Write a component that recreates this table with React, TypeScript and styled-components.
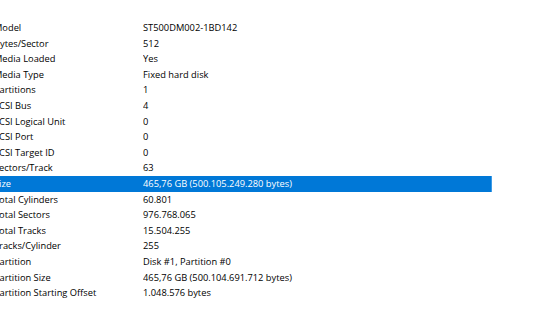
import React from "react";
import styled, { createGlobalStyle } from "styled-components";

const Global = createGlobalStyle`
  html, body { margin: 0; padding: 0; background: #fff; }
  body { width: 560px; height: 336px; overflow: hidden; }
`;

// Visible part of the properties list, scrolled a few pixels to the right.
const Viewport = styled.div`
  width: 560px;
  height: 336px;
  overflow: hidden;
  background: #ffffff;
  padding-top: 20px;
  box-sizing: border-box;
`;

const List = styled.div`
  margin-left: -6px;
  width: 498px;
  display: flex;
  flex-direction: column;
  font-family: "Open Sans", "Noto Sans", sans-serif;
  font-size: 9.3px;
  color: #000;
`;

const Row = styled.div<{ $selected?: boolean }>`
  display: grid;
  grid-template-columns: 149px 1fr;
  height: 15.6px;
  line-height: 15.6px;
  white-space: nowrap;
  background: ${(p) => (p.$selected ? "#0078d7" : "transparent")};
  color: ${(p) => (p.$selected ? "#ffffff" : "inherit")};
  box-shadow: ${(p) => (p.$selected ? "inset -1px 0 0 #3d9be6" : "none")};
`;

const Cell = styled.span`
  overflow: hidden;
`;

const rows: [string, string][] = [
  ["Model", "ST500DM002-1BD142"],
  ["Bytes/Sector", "512"],
  ["Media Loaded", "Yes"],
  ["Media Type", "Fixed hard disk"],
  ["Partitions", "1"],
  ["SCSI Bus", "4"],
  ["SCSI Logical Unit", "0"],
  ["SCSI Port", "0"],
  ["SCSI Target ID", "0"],
  ["Sectors/Track", "63"],
  ["Size", "465,76 GB (500.105.249.280 bytes)"],
  ["Total Cylinders", "60.801"],
  ["Total Sectors", "976.768.065"],
  ["Total Tracks", "15.504.255"],
  ["Tracks/Cylinder", "255"],
  ["Partition", "Disk #1, Partition #0"],
  ["Partition Size", "465,76 GB (500.104.691.712 bytes)"],
  ["Partition Starting Offset", "1.048.576 bytes"],
];

export default function App() {
  return (
    <>
      <Global />
      <Viewport>
        <List>
          {rows.map(([k, v]) => (
            <Row key={k} $selected={k === "Size"}>
              <Cell>{k}</Cell>
              <Cell>{v}</Cell>
            </Row>
          ))}
        </List>
      </Viewport>
    </>
  );
}
